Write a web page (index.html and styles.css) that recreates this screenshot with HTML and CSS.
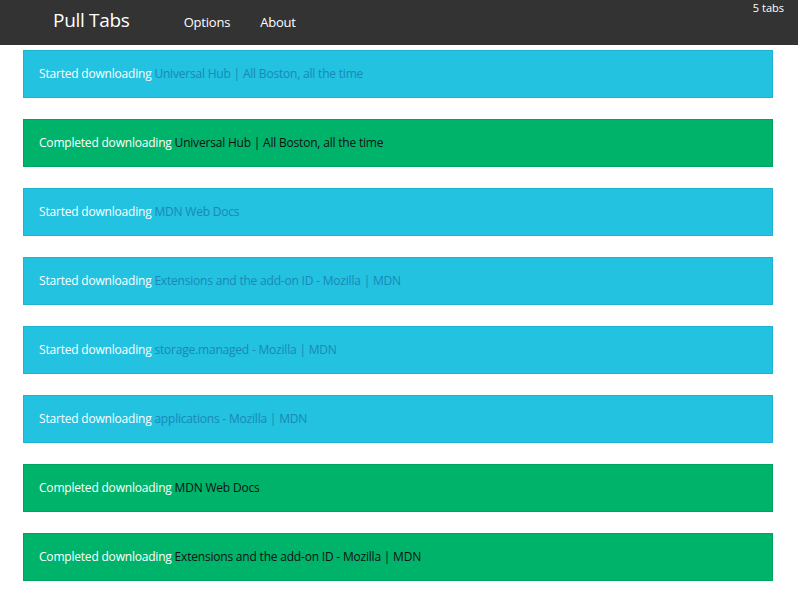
FILE: index.html
```html
<!DOCTYPE html>
<html>
<head>
<meta charset="utf-8">
<link rel="stylesheet" href="styles.css">
</head>
<body>
<nav class="navbar">
  <div class="brand">Pull Tabs</div>
  <ul class="nav">
    <li>Options</li>
    <li>About</li>
  </ul>
  <div class="count">5 tabs</div>
</nav>
<main class="list">
  <div class="alert info">Started downloading <a>Universal Hub | All Boston, all the time</a></div>
  <div class="alert success">Completed downloading <a>Universal Hub | All Boston, all the time</a></div>
  <div class="alert info">Started downloading <a>MDN Web Docs</a></div>
  <div class="alert info">Started downloading <a>Extensions and the add-on ID - Mozilla | MDN</a></div>
  <div class="alert info">Started downloading <a>storage.managed - Mozilla | MDN</a></div>
  <div class="alert info">Started downloading <a>applications - Mozilla | MDN</a></div>
  <div class="alert success">Completed downloading <a>MDN Web Docs</a></div>
  <div class="alert success">Completed downloading <a>Extensions and the add-on ID - Mozilla | MDN</a></div>
</main>
</body>
</html>
```
FILE: styles.css
```css
html, body {
  margin: 0;
  padding: 0;
  background: #fff;
  font-family: "Open Sans", "Liberation Sans", sans-serif;
  font-size: 12px;
  color: #fff;
}
.navbar {
  height: 45px;
  background: #333333;
  display: flex;
  align-items: center;
  padding-left: 53px;
  position: relative;
  box-sizing: border-box;
}
.brand {
  font-size: 19px;
  color: #fff;
  margin-top: -5px;
  letter-spacing: -0.3px;
}
.nav {
  list-style: none;
  display: flex;
  gap: 30px;
  margin: -2px 0 0 54px;
  padding: 0;
  font-size: 13px;
  letter-spacing: -0.2px;
  color: #fff;
}
.count {
  position: absolute;
  right: 14px;
  top: 0;
  font-size: 11px;
  color: #fff;
}
.list {
  padding: 5px 25px 0 23px;
  display: flex;
  flex-direction: column;
  gap: 21px;
}
.alert {
  height: 48px;
  box-sizing: border-box;
  border: 1px solid;
  padding: 0 15px 2px;
  display: flex;
  align-items: center;
  white-space: pre;
  letter-spacing: -0.2px;
}
.alert.info {
  background: #22c2e0;
  border-color: #1eb3d2;
}
.alert.info a {
  color: #1a88b8;
}
.alert.success {
  background: #00b36b;
  border-color: #00a260;
}
.alert.success a {
  color: #111;
}
```
